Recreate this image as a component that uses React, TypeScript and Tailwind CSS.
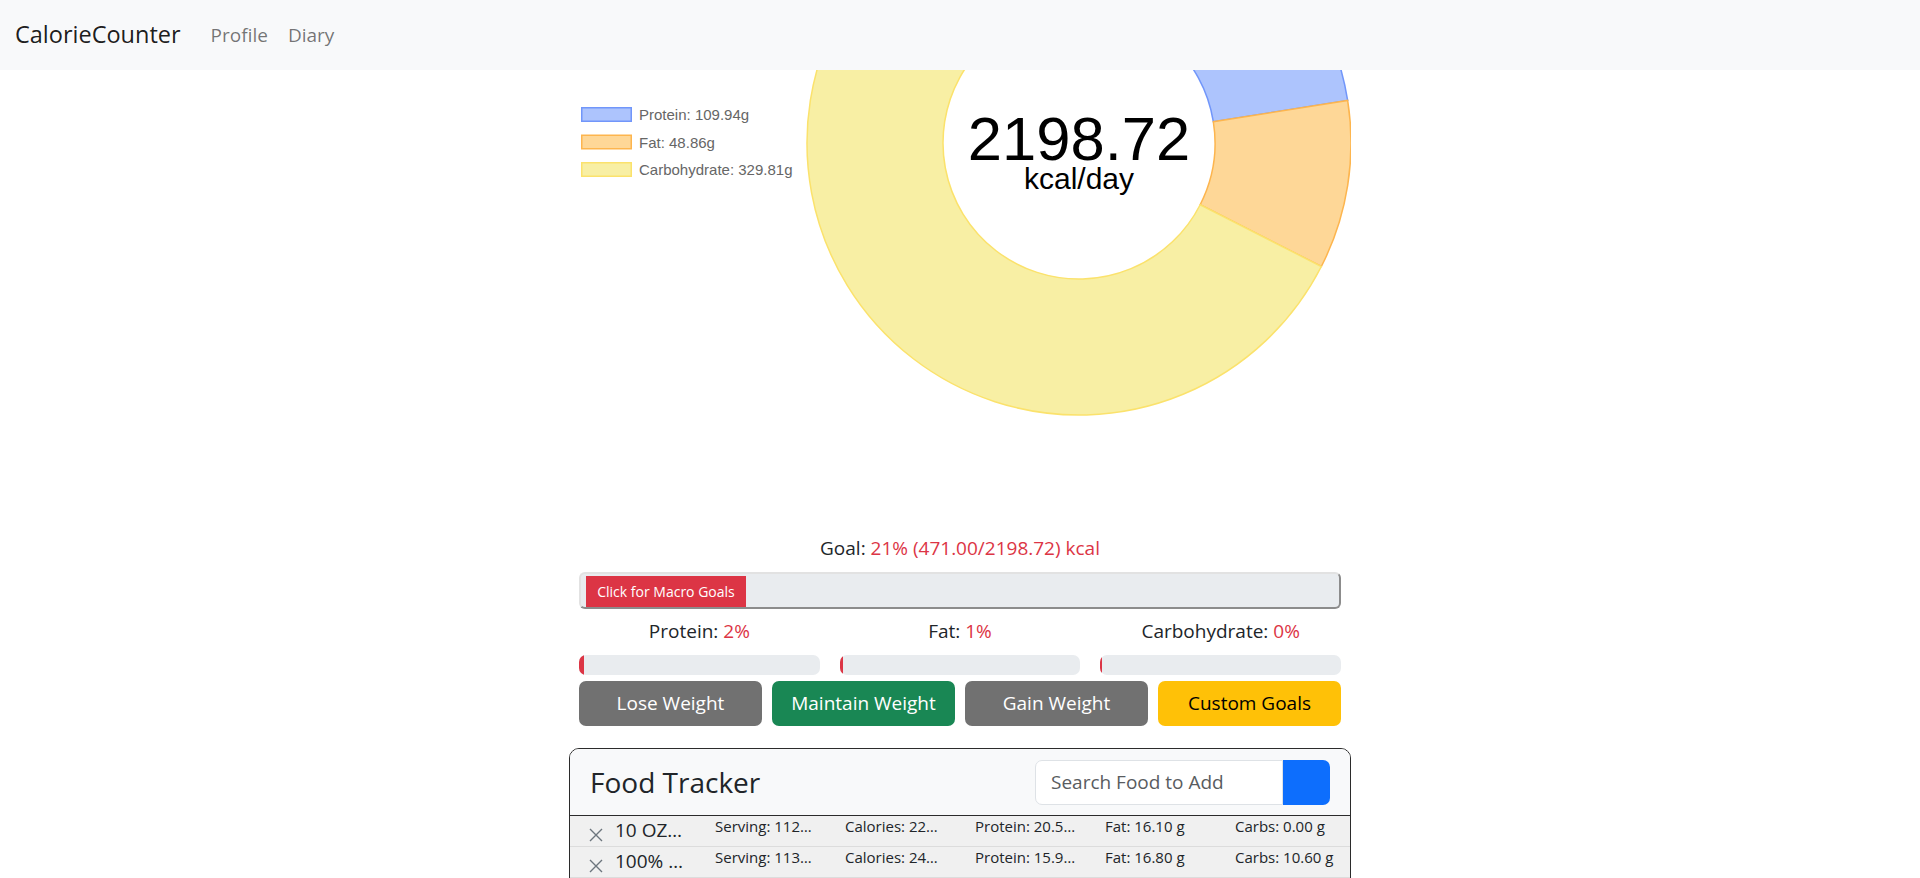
type Slice = { label: string; grams: number; fill: string; stroke: string };

const slices: Slice[] = [
  { label: 'Protein', grams: 109.94, fill: '#adc4fd', stroke: '#7196fa' },
  { label: 'Fat', grams: 48.86, fill: '#fed797', stroke: '#fdb54e' },
  { label: 'Carbohydrate', grams: 329.81, fill: '#f8efa4', stroke: '#fbe26c' },
];

// donut geometry, relative to the svg box (svg starts at page x=569, y=70)
const CX = 510;
const CY = 73;
const R = 272;
const r = 136;

function pt(deg: number, radius: number) {
  const a = (deg * Math.PI) / 180;
  return [CX + radius * Math.sin(a), CY - radius * Math.cos(a)];
}

function arcPath(start: number, end: number) {
  const large = end - start > 180 ? 1 : 0;
  const [x1, y1] = pt(start, R);
  const [x2, y2] = pt(end, R);
  const [x3, y3] = pt(end, r);
  const [x4, y4] = pt(start, r);
  return `M${x1} ${y1} A${R} ${R} 0 ${large} 1 ${x2} ${y2} L${x3} ${y3} A${r} ${r} 0 ${large} 0 ${x4} ${y4} Z`;
}

function MacroChart() {
  const total = slices.reduce((s, x) => s + x.grams, 0);
  let angle = 0;
  const arcs = slices.map((s) => {
    const start = angle;
    angle += (s.grams / total) * 360;
    return { ...s, d: arcPath(start, angle) };
  });

  return (
    <svg width="782" height="463" viewBox="0 0 782 463" className="block overflow-hidden">
      {arcs.map((a) => (
        <path key={a.label} d={a.d} fill={a.fill} stroke={a.stroke} strokeWidth="1.5" />
      ))}
      <text x={CX} y={90} textAnchor="middle" fontFamily="'Liberation Sans', Arial, sans-serif" fontSize="61.5" fill="#000">
        2198.72
      </text>
      <text x={CX} y={119} textAnchor="middle" fontFamily="'Liberation Sans', Arial, sans-serif" fontSize="30" fill="#000">
        kcal/day
      </text>
      {slices.map((s, i) => (
        <g key={s.label}>
          <rect x="12.75" y={37.75 + i * 27.5} width="49.5" height="13.5" fill={s.fill} stroke={s.stroke} strokeWidth="1.5" />
          <text x="70" y={50 + i * 27.5} fontFamily="'Liberation Sans', Arial, sans-serif" fontSize="15" fill="#666">
            {s.label}: {s.grams.toFixed(2)}g
          </text>
        </g>
      ))}
    </svg>
  );
}

const macros = [
  { name: 'Protein', pct: '2%', width: 5 },
  { name: 'Fat', pct: '1%', width: 3 },
  { name: 'Carbohydrate', pct: '0%', width: 2 },
];

const foods = [
  ['10 OZ…', 'Serving: 112…', 'Calories: 22…', 'Protein: 20.5…', 'Fat: 16.10 g', 'Carbs: 0.00 g'],
  ['100% …', 'Serving: 113…', 'Calories: 24…', 'Protein: 15.9…', 'Fat: 16.80 g', 'Carbs: 10.60 g'],
];

export default function App() {
  return (
    <div className="h-screen overflow-hidden bg-white text-[#212529] font-['Open_Sans','Noto_Sans',sans-serif]">
      <nav className="h-[70px] bg-[#f8f9fa] flex items-center px-[15px]">
        <span className="text-[23.5px] text-black/90 mr-[20px]">CalorieCounter</span>
        <a className="px-[10px] text-[19px] text-black/55">Profile</a>
        <a className="px-[10px] text-[19px] text-black/55">Diary</a>
      </nav>

      <main className="w-[782px] mx-auto">
        <MacroChart />

        <div className="px-[10px]">
          <p className="text-center text-[19px] leading-[30px]">
            Goal: <span className="text-[#dc3545]">21% (471.00/2198.72) kcal</span>
          </p>

          <button className="mt-[9px] w-full h-[37px] rounded-[6px] border-2 border-t-[#e2e2e2] border-l-[#e2e2e2] border-b-[#8c8c8c] border-r-[#8c8c8c] bg-[#e9ecef] pl-[5px] pt-[2px] flex items-stretch">
            <span className="w-[160px] bg-[#dc3545] text-white text-[14px] flex items-center justify-center">
              Click for Macro Goals
            </span>
          </button>

          <div className="mt-[7px] grid grid-cols-3 gap-x-[20px]">
            {macros.map((m) => (
              <div key={m.name}>
                <p className="text-center text-[19px] leading-[30px]">
                  {m.name}: <span className="text-[#dc3545]">{m.pct}</span>
                </p>
                <div className="mt-[9px] h-[20px] rounded-[7px] bg-[#e9ecef] overflow-hidden flex">
                  <div className="bg-[#dc3545]" style={{ width: m.width }} />
                </div>
              </div>
            ))}
          </div>

          <div className="mt-[6px] grid grid-cols-4 gap-x-[10px]">
            <button className="h-[45px] rounded-[7px] bg-[#717171] text-white text-[19px]">Lose Weight</button>
            <button className="h-[45px] rounded-[7px] bg-[#198754] text-white text-[19px]">Maintain Weight</button>
            <button className="h-[45px] rounded-[7px] bg-[#717171] text-white text-[19px]">Gain Weight</button>
            <button className="h-[45px] rounded-[7px] bg-[#ffc107] text-black text-[19px]">Custom Goals</button>
          </div>
        </div>

        <section className="mt-[22px] pb-[40px] border border-[#2b2b2b] rounded-[10px] overflow-hidden">
          <header className="h-[67px] bg-[#f8f9fa] border-b border-[#2b2b2b] flex items-center justify-between px-[20px]">
            <h4 className="text-[28px] text-[#212529]">Food Tracker</h4>
            <div className="flex h-[45px]">
              <input
                placeholder="Search Food to Add"
                className="w-[248px] h-full border border-[#dee2e6] rounded-l-[7px] bg-white px-[15px] text-[19px] placeholder:text-[#595c5f] outline-none"
              />
              <button className="w-[47px] h-full bg-[#0d6efd] rounded-r-[7px]" />
            </div>
          </header>
          {foods.map((row) => (
            <div key={row[0]} className="h-[31px] bg-[#f0f0f0] border-b border-[#dcdcdc] grid grid-cols-6 items-start">
              <div className="flex items-start pl-[19px]">
                <svg viewBox="0 0 14 14" className="mt-[12px] w-[14px] h-[14px] shrink-0">
                  <path d="M1 1 L13 13 M13 1 L1 13" stroke="#6c757d" strokeWidth="1.4" fill="none" />
                </svg>
                <span className="ml-[12px] text-[19px] leading-[24px] mt-[2px] whitespace-nowrap">{row[0]}</span>
              </div>
              {row.slice(1).map((cell, i) => (
                <span key={i} className="px-[15px] text-[15px] leading-[20px] whitespace-nowrap overflow-hidden">
                  {cell}
                </span>
              ))}
            </div>
          ))}
        </section>
      </main>
    </div>
  );
}
